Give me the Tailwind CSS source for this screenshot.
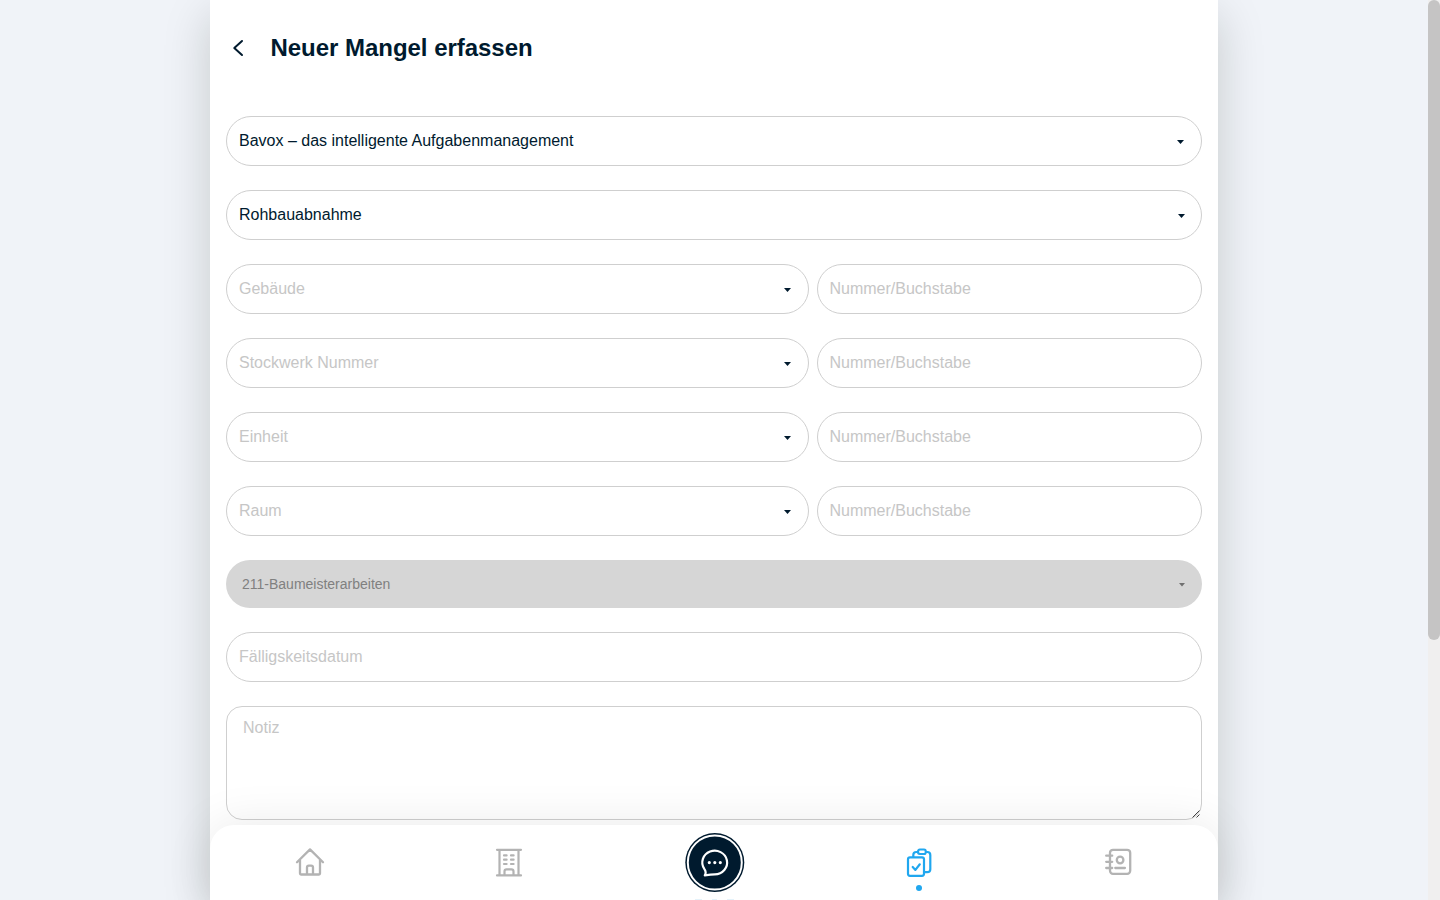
<!DOCTYPE html>
<html lang="de">
<head>
<meta charset="utf-8">
<title>Neuer Mangel erfassen</title>
<script src="https://cdn.jsdelivr.net/npm/@tailwindcss/browser@4"></script>
</head>
<body class="h-[900px] overflow-hidden bg-[#f0f3f8] font-['Liberation_Sans',Arial,sans-serif] text-base text-[#001a2e]">
<div class="flex h-[900px] overflow-hidden">
  <div class="flex flex-1 justify-center overflow-hidden">
    <main class="relative h-[900px] w-[1008px] bg-white shadow-[0_16px_44px_rgba(0,20,10,0.18)]">
      <header class="flex h-24 items-center pl-[22px]">
        <svg class="h-[18px] w-3" viewBox="0 0 12 18" fill="none" stroke="#001a2e" stroke-width="2" stroke-linecap="round" stroke-linejoin="round"><path d="M10 2 2.3 9 10 16"/></svg>
        <h1 class="ml-[26.5px] text-2xl font-bold tracking-[-0.03px]">Neuer Mangel erfassen</h1>
      </header>
      <form class="mt-5 flex flex-col gap-6 pr-[15.6px] pl-[16.4px]">
        <div class="flex h-[50px] items-center justify-between rounded-full border border-[#cfcfcf] pr-[17px] pl-[11.6px]"><span>Bavox – das intelligente Aufgabenmanagement</span><svg class="mt-[2px] h-1 w-[7px]" viewBox="0 0 7 4" fill="#001a2e"><path d="M0 0h7L3.5 4z"/></svg></div>
        <div class="flex h-[50px] items-center justify-between rounded-full border border-[#cfcfcf] pr-[16.8px] pl-[11.6px]"><span>Rohbauabnahme</span><svg class="mt-[2px] h-1 w-[7px]" viewBox="0 0 7 4" fill="#001a2e"><path d="M0 0h7L3.5 4z"/></svg></div>
        <div class="flex gap-2 text-[#c6c6c6]">
          <div class="flex h-[50px] w-[582.6px] items-center justify-between rounded-full border border-[#cfcfcf] pr-[17px] pl-[11.6px]"><span>Gebäude</span><svg class="mt-[2px] h-1 w-[7px]" viewBox="0 0 7 4" fill="#001a2e"><path d="M0 0h7L3.5 4z"/></svg></div>
          <div class="flex h-[50px] flex-1 items-center rounded-full border border-[#cfcfcf] pl-[11.5px]">Nummer/Buchstabe</div>
        </div>
        <div class="flex gap-2 text-[#c6c6c6]">
          <div class="flex h-[50px] w-[582.6px] items-center justify-between rounded-full border border-[#cfcfcf] pr-[17px] pl-[11.6px]"><span>Stockwerk Nummer</span><svg class="mt-[2px] h-1 w-[7px]" viewBox="0 0 7 4" fill="#001a2e"><path d="M0 0h7L3.5 4z"/></svg></div>
          <div class="flex h-[50px] flex-1 items-center rounded-full border border-[#cfcfcf] pl-[11.5px]">Nummer/Buchstabe</div>
        </div>
        <div class="flex gap-2 text-[#c6c6c6]">
          <div class="flex h-[50px] w-[582.6px] items-center justify-between rounded-full border border-[#cfcfcf] pr-[17px] pl-[11.6px]"><span>Einheit</span><svg class="mt-[2px] h-1 w-[7px]" viewBox="0 0 7 4" fill="#001a2e"><path d="M0 0h7L3.5 4z"/></svg></div>
          <div class="flex h-[50px] flex-1 items-center rounded-full border border-[#cfcfcf] pl-[11.5px]">Nummer/Buchstabe</div>
        </div>
        <div class="flex gap-2 text-[#c6c6c6]">
          <div class="flex h-[50px] w-[582.6px] items-center justify-between rounded-full border border-[#cfcfcf] pr-[17px] pl-[11.6px]"><span>Raum</span><svg class="mt-[2px] h-1 w-[7px]" viewBox="0 0 7 4" fill="#001a2e"><path d="M0 0h7L3.5 4z"/></svg></div>
          <div class="flex h-[50px] flex-1 items-center rounded-full border border-[#cfcfcf] pl-[11.5px]">Nummer/Buchstabe</div>
        </div>
        <div class="flex h-12 items-center justify-between rounded-full bg-[#d6d6d6] pr-[17.4px] pl-[15.6px] text-sm text-[#808080]"><span>211-Baumeisterarbeiten</span><svg class="mt-0.5 h-[3.5px] w-[6px]" viewBox="0 0 7 4" fill="#707070"><path d="M0 0h7L3.5 4z"/></svg></div>
        <div class="flex h-[50px] items-center rounded-full border border-[#cfcfcf] pl-[11.6px] text-[#c6c6c6]">Fälligskeitsdatum</div>
        <div class="flex h-[114px] items-end justify-between rounded-2xl border border-[#cfcfcf] pl-[15.6px] text-[#c6c6c6]">
          <span class="self-start pt-[9px]">Notiz</span>
          <svg class="mr-px mb-px h-2 w-2" viewBox="0 0 8 8" fill="none" stroke="#444" stroke-width="1"><path d="M.5 7.5l7-7M4.5 7.5l3-3"/></svg>
        </div>
      </form>
      <nav class="absolute bottom-0 left-0 h-[75px] w-[1008px] rounded-t-3xl bg-white shadow-[0_0_48px_rgba(0,0,0,0.09)]">
        <div class="flex h-[75px] items-start pl-[84.5px] text-[#b3b3b3]">
          <svg class="mt-[22px] h-[30px] w-[30px]" viewBox="0 0 30 30" fill="none" stroke="currentColor" stroke-width="2.3" stroke-linecap="round" stroke-linejoin="round"><path d="M2 15.2 15 2.4 28 15.2M5 13v13.5q0 1 1 1H24q1 0 1-1V13M12 27.5v-7q0-1.8 1.8-1.8h2.4q1.8 0 1.8 1.8v7"/></svg>
          <svg class="mt-[22px] ml-[169.5px] h-[30px] w-[30px]" viewBox="0 0 30 30" fill="none" stroke="currentColor" stroke-width="2.2" stroke-linecap="round" stroke-linejoin="round"><path d="M3 2.8H27M3 28.4H27M5.5 2.8V28.4M24.5 2.8V28.4M10.5 28.4v-4q0-2 2-2h5q2 0 2 2v4M10 8.4h2.6M17 8.4h2.6M10 12.7h2.6M17 12.7h2.6M10 17h2.6M17 17h2.6"/></svg>
          <div class="ml-[160.6px] flex h-[75px] w-[60px] flex-col items-center pt-2">
            <svg class="h-[60px] w-[60px] shrink-0" viewBox="0 0 60 60" fill="none" stroke="#fff" stroke-linecap="round" stroke-linejoin="round"><circle cx="29.8" cy="29.5" r="29.5" fill="#001a2e" stroke="none"/><circle cx="29.8" cy="29.5" r="27" stroke-width="2"/><path d="M19.8 42.3c1.5-2.3 1-4.3-.5-6.4A12.4 11.8 0 1 1 29.8 41.3Q26 41.5 19.8 42.3Z" stroke-width="2.2"/><path d="M24.3 29.6h.01M29.8 29.6h.01M35.3 29.6h.01" stroke-width="3.2"/></svg>
            <div class="mt-[6px] flex gap-[10px]"><i class="h-px w-[7px] bg-[#e4f2fa]"></i><i class="h-px w-[5px] bg-[#e4f2fa]"></i><i class="h-px w-[7px] bg-[#e4f2fa]"></i></div>
          </div>
          <div class="ml-[159.4px] flex h-[75px] w-[30px] flex-col items-center pt-[23px] text-[#20a7ef]">
            <svg class="h-[30px] w-[30px] shrink-0" viewBox="0 0 30 30" fill="none" stroke="currentColor" stroke-width="2.2" stroke-linecap="round" stroke-linejoin="round"><rect x="4" y="9.3" width="16" height="18.5" rx="2"/><path d="M8.7 19l2.7 2.9 4.4-5.6M9.3 9V7q0-3 3-3h1.5M20 24.2h3.3q3 0 3-3V7q0-3-3-3H22M16 1.5h4q1.8 0 1.8 2.3T20 6H15.8Q14 6 14 3.8T16 1.5Z"/></svg>
            <i class="mt-[7px] h-[6px] w-[6px] shrink-0 rounded-full bg-current"></i>
          </div>
          <svg class="mt-[22px] ml-[169px] h-[30px] w-[30px]" viewBox="0 0 30 30" fill="none" stroke="currentColor" stroke-width="2.3" stroke-linecap="round"><rect x="7" y="2.8" width="20.2" height="24" rx="3"/><path d="M3.2 8.7h6M3.2 14.8h6M3.2 21h6M12.3 21h9.6"/><circle cx="17.1" cy="13" r="3.3"/></svg>
        </div>
      </nav>
    </main>
  </div>
  <div class="h-[900px] w-3 bg-[#f0efef]"><div class="h-[640px] w-3 rounded-full bg-[#c5c4c4]"></div></div>
</div>
</body>
</html>
